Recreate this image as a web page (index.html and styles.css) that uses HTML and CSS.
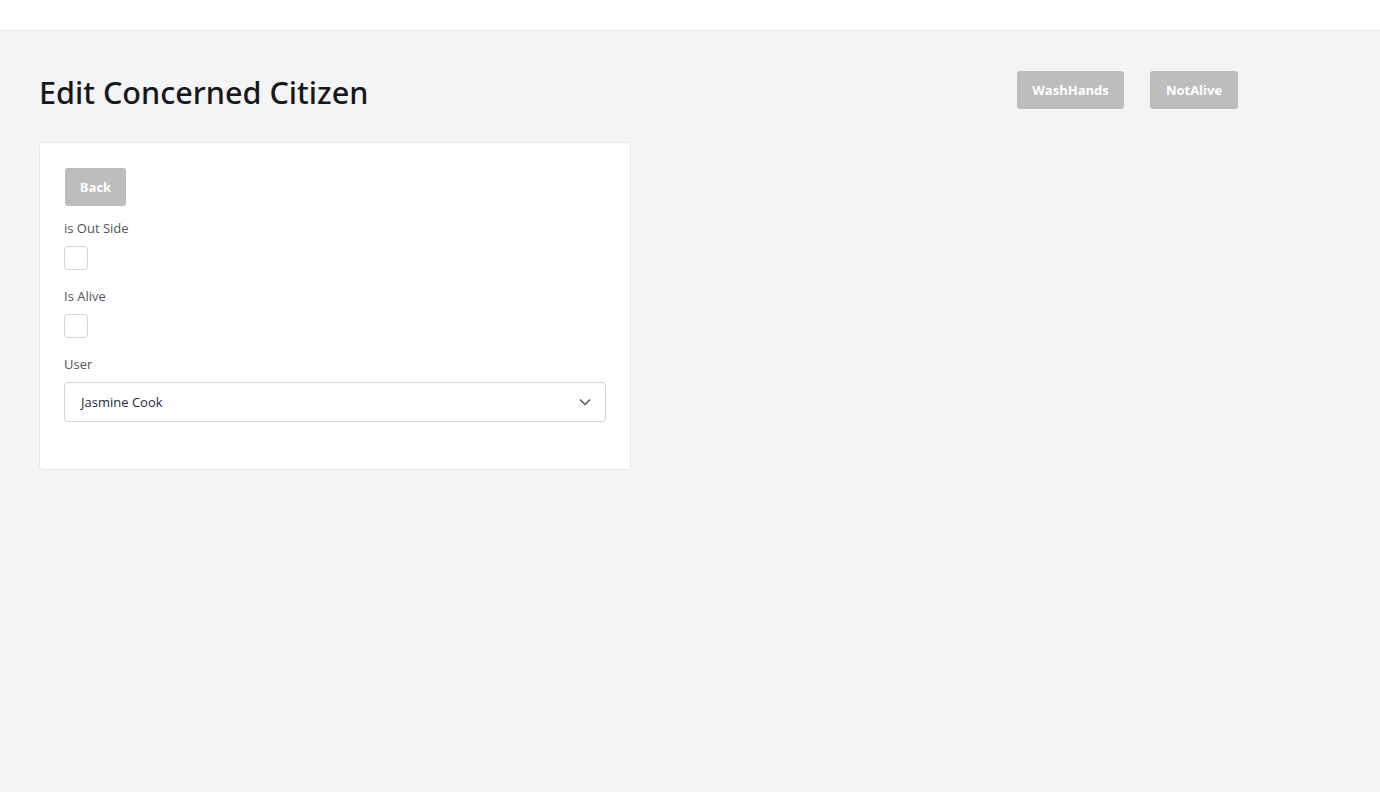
FILE: index.html
```html
<!DOCTYPE html>
<html>
<head>
<meta charset="utf-8">
<link rel="stylesheet" href="styles.css">
</head>
<body>
<header class="topbar"></header>
<main class="page">
  <div class="page-head">
    <h1 class="title">Edit Concerned Citizen</h1>
    <div class="actions">
      <button class="btn btn-wash">WashHands</button>
      <button class="btn btn-alive">NotAlive</button>
    </div>
  </div>
  <section class="card">
    <button class="btn btn-back">Back</button>
    <form class="form">
      <div class="field">
        <label class="label">is Out Side</label>
        <span class="checkbox"></span>
      </div>
      <div class="field">
        <label class="label">Is Alive</label>
        <span class="checkbox"></span>
      </div>
      <div class="field">
        <label class="label">User</label>
        <div class="select">
          <span>Jasmine Cook</span>
          <svg class="chev" width="12" height="8" viewBox="0 0 12 8"><path d="M1 1.5 L6 6.5 L11 1.5" fill="none" stroke="#555" stroke-width="1.5"/></svg>
        </div>
      </div>
    </form>
  </section>
</main>
</body>
</html>
```

FILE: styles.css
```css
* { box-sizing: border-box; }
html, body { margin: 0; padding: 0; }
body {
  background: #f3f4f6;
  font-family: "Open Sans", "Noto Sans", sans-serif;
  color: #1f2937;
  height: 792px;
}
.topbar {
  height: 31px;
  background: #fff;
  border-bottom: 1px solid #e5e7eb;
}
.page {
  padding: 0 39px;
}
.page-head {
  display: flex;
  align-items: flex-start;
  height: 111px;
}
.title {
  margin: 41px 0 0 0;
  font-family: "Noto Sans", sans-serif;
  font-weight: 500;
  font-size: 30.6px;
  line-height: 40px;
  color: #18181b;
  width: 978px;
}
.actions {
  display: flex;
  gap: 26px;
  margin-top: 40px;
}
.btn {
  border: none;
  background: #bdbdbd;
  color: #fff;
  font-family: "Open Sans", sans-serif;
  font-weight: 700;
  font-size: 13px;
  height: 38px;
  border-radius: 3px;
  padding: 0;
}
.btn-wash { width: 107px; }
.btn-alive { width: 88px; }
.btn-back { width: 61px; display: block; margin-left: 1px; }
.card {
  width: 592px;
  background: #fff;
  border: 1px solid #e5e7eb;
  border-radius: 4px;
  padding: 25px 24px 47px 24px;
}
.form {
  display: flex;
  flex-direction: column;
  gap: 16px;
  margin-top: 12px;
}
.field {
  display: flex;
  flex-direction: column;
  gap: 8px;
}
.label {
  font-size: 13px;
  line-height: 20px;
  color: #52525b;
}
.checkbox {
  width: 24px;
  height: 24px;
  border: 1px solid #d1d5db;
  border-radius: 4px;
  background: #fff;
}
.select {
  height: 40px;
  border: 1px solid #d1d5db;
  border-radius: 4px;
  display: flex;
  align-items: center;
  justify-content: space-between;
  padding: 0 14px 0 16px;
  font-size: 13px;
  color: #1f2937;
}
```
